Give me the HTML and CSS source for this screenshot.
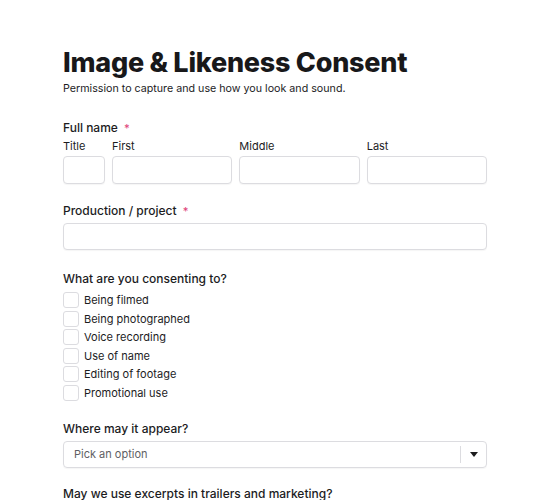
FILE: index.html
```html
<!DOCTYPE html>
<html lang="en">
<head>
<meta charset="utf-8">
<title>Image &amp; Likeness Consent</title>
<link rel="stylesheet" href="styles.css">
</head>
<body>
<main class="form">
  <h1 class="title">Image &amp; Likeness Consent</h1>
  <p class="subtitle">Permission to capture and use how you look and sound.</p>

  <section class="field field-name">
    <div class="label label-name">Full name <span class="req">*</span></div>
    <div class="name-grid">
      <label class="sub">Title<input class="input" type="text"></label>
      <label class="sub">First<input class="input" type="text"></label>
      <label class="sub">Middle<input class="input" type="text"></label>
      <label class="sub">Last<input class="input" type="text"></label>
    </div>
  </section>

  <section class="field field-project">
    <div class="label">Production / project <span class="req">*</span></div>
    <input class="input input-full" type="text">
  </section>

  <section class="field field-consent">
    <div class="label label-checks">What are you consenting to?</div>
    <ul class="checks">
      <li class="check"><span class="box"></span>Being filmed</li>
      <li class="check"><span class="box"></span>Being photographed</li>
      <li class="check"><span class="box"></span>Voice recording</li>
      <li class="check"><span class="box"></span>Use of name</li>
      <li class="check"><span class="box"></span>Editing of footage</li>
      <li class="check"><span class="box"></span>Promotional use</li>
    </ul>
  </section>

  <section class="field field-after-checks">
    <div class="label">Where may it appear?</div>
    <div class="select">
      <span class="placeholder">Pick an option</span>
      <span class="sep"></span>
      <span class="arrow"></span>
    </div>
  </section>

  <section class="field field-last">
    <div class="label">May we use excerpts in trailers and marketing?</div>
  </section>
</main>
</body>
</html>
```

FILE: styles.css
```css
* { box-sizing: border-box; }
html, body { margin: 0; padding: 0; background: #fff; }
body {
  font-family: Inter, "Noto Sans", sans-serif;
  color: #1c1c1e;
}
.form {
  width: 424px;
  margin-left: 63px;
  padding-top: 45px;
}
.title {
  margin: 0;
  font-size: 27px;
  line-height: 36px;
  font-weight: 800;
  letter-spacing: -0.25px;
  color: #18181a;
}
.subtitle {
  margin: 0;
  font-size: 10.7px;
  line-height: 15px;
  color: #1c1c1e;
}
.field { margin-top: 19px; }
.field-name { margin-top: 23px; }
.field-project { margin-top: 18px; }
.field-consent { margin-top: 20px; }
.field-after-checks { margin-top: 19px; }
.field-last { margin-top: 17px; }
.label {
  font-size: 12px;
  line-height: 18px;
  font-weight: 500;
  color: #1c1c1e;
  margin-bottom: 3px;
}
.label-name { margin-bottom: 4px; }
.label-checks { margin-bottom: 4px; }
.req { color: #e0457b; font-size: 11px; margin-left: 3px; }
.name-grid {
  display: grid;
  grid-template-columns: 42px 1fr 1fr 1fr;
  column-gap: 7px;
  margin-top: -2px;
}
.sub {
  display: flex;
  flex-direction: column;
  gap: 3px;
  font-size: 11px;
  line-height: 14px;
  color: #1c1c1e;
}
.input {
  display: block;
  width: 100%;
  height: 28px;
  margin: 0;
  border: 1px solid #dcdce0;
  border-radius: 4px;
  background: #fff;
  box-shadow: 0 1px 1px rgba(0,0,0,0.04);
  font: inherit;
}
.input-full { height: 27px; }
.checks {
  list-style: none;
  margin: 0;
  padding: 0;
  display: flex;
  flex-direction: column;
  gap: 2.5px;
}
.check {
  display: flex;
  align-items: center;
  gap: 5px;
  font-size: 11px;
  line-height: 16px;
  color: #1c1c1e;
}
.box {
  width: 16px;
  height: 16px;
  border: 1px solid #dcdce0;
  border-radius: 3px;
  background: #fff;
  flex: none;
}
.select {
  display: flex;
  align-items: center;
  height: 27px;
  border: 1px solid #dcdce0;
  border-radius: 4px;
  box-shadow: 0 1px 1px rgba(0,0,0,0.04);
  padding: 0 8px 0 10px;
}
.placeholder {
  flex: 1;
  font-size: 11px;
  color: #5f5f64;
}
.sep {
  width: 1px;
  height: 17px;
  background: #dcdce0;
  margin-right: 9px;
}
.arrow {
  width: 0;
  height: 0;
  border-left: 4.5px solid transparent;
  border-right: 4.5px solid transparent;
  border-top: 5px solid #1c1c1e;
}
```
